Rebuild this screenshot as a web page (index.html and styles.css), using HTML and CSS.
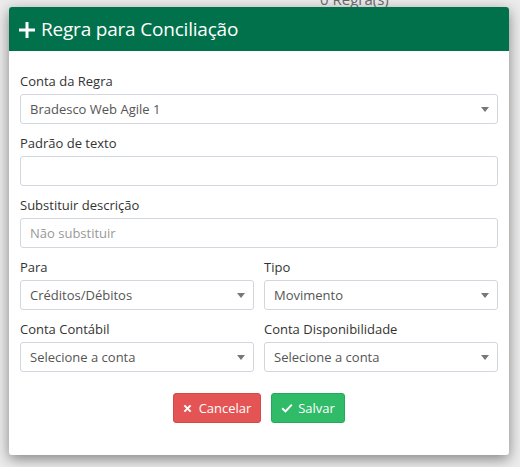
FILE: index.html
```html
<!DOCTYPE html>
<html lang="pt-BR">
<head>
<meta charset="utf-8">
<title>Regra para Conciliação</title>
<link rel="stylesheet" href="styles.css">
</head>
<body>
  <div class="backdrop-text">0 Regra(s)</div>
  <div class="modal">
    <div class="modal-header">
      <svg class="plus" viewBox="0 0 16 16" width="16" height="16" aria-hidden="true">
        <path d="M8 0v16M0 8h16" stroke="#fff" stroke-width="3" fill="none"/>
      </svg>
      <h1 class="modal-title">Regra para Conciliação</h1>
    </div>
    <form class="modal-body">
      <div class="group">
        <label class="label">Conta da Regra</label>
        <div class="select"><span>Bradesco Web Agile 1</span><i class="caret"></i></div>
      </div>
      <div class="group">
        <label class="label">Padrão de texto</label>
        <div class="input"></div>
      </div>
      <div class="group">
        <label class="label">Substituir descrição</label>
        <div class="input placeholder">Não substituir</div>
      </div>
      <div class="row">
        <div class="group">
          <label class="label">Para</label>
          <div class="select"><span>Créditos/Débitos</span><i class="caret"></i></div>
        </div>
        <div class="group">
          <label class="label">Tipo</label>
          <div class="select"><span>Movimento</span><i class="caret"></i></div>
        </div>
      </div>
      <div class="row">
        <div class="group">
          <label class="label">Conta Contábil</label>
          <div class="select"><span>Selecione a conta</span><i class="caret"></i></div>
        </div>
        <div class="group">
          <label class="label">Conta Disponibilidade</label>
          <div class="select"><span>Selecione a conta</span><i class="caret"></i></div>
        </div>
      </div>
      <div class="actions">
        <button type="button" class="btn btn-danger">
          <svg class="icon" viewBox="0 0 10 10" width="9" height="9" aria-hidden="true">
            <path d="M1.5 1.5l7 7M8.5 1.5l-7 7" stroke="#fff" stroke-width="2.2" fill="none"/>
          </svg>
          Cancelar
        </button>
        <button type="button" class="btn btn-success">
          <svg class="icon" viewBox="0 0 12 10" width="12" height="10" aria-hidden="true">
            <path d="M1.2 5.2l3.3 3.2 6.3-6.8" stroke="#fff" stroke-width="2" fill="none"/>
          </svg>
          Salvar
        </button>
      </div>
    </form>
  </div>
</body>
</html>
```

FILE: styles.css
```css
* { box-sizing: border-box; }

html, body {
  margin: 0;
  padding: 0;
}

body {
  width: 520px;
  height: 467px;
  overflow: hidden;
  background: #ececec;
  font-family: "Open Sans", "DejaVu Sans", sans-serif;
  color: #333;
}

/* page text partly hidden behind the dialog */
.backdrop-text {
  height: 11px;
  line-height: 7px;
  margin-top: -4px;
  padding-left: 320px;
  font-size: 15px;
  color: #666;
  overflow: hidden;
}

.modal {
  width: 500px;
  margin-left: 9px;
  background: #fff;
  border-radius: 3px;
  box-shadow: 0 4px 14px rgba(0, 0, 0, 0.45);
  overflow: hidden;
}

.modal-header {
  height: 44px;
  background: #00714a;
  display: flex;
  align-items: center;
  padding-left: 10px;
  gap: 6px;
}

.plus { flex: none; margin-top: 1px; }

.modal-title {
  margin: 0;
  font-size: 19px;
  font-weight: 400;
  color: #fff;
  letter-spacing: -0.2px;
}

.modal-body {
  padding: 21px 11px 32px;
}

.group { margin-bottom: 10px; }

.label {
  display: block;
  font-size: 13px;
  line-height: 18px;
  margin-bottom: 4px;
  color: #333;
}

.select, .input {
  height: 30px;
  border: 1px solid #d2d6de;
  border-radius: 3px;
  background: #fff;
  display: flex;
  align-items: center;
  padding: 0 9px;
  font-size: 13px;
  color: #555;
}

.select span { flex: 1; }

.placeholder { color: #999; }

.caret {
  width: 0;
  height: 0;
  border-left: 4px solid transparent;
  border-right: 4px solid transparent;
  border-top: 5px solid #777;
  margin-right: -1px;
}

.row {
  display: grid;
  grid-template-columns: 1fr 1fr;
  column-gap: 10px;
}

.actions {
  display: flex;
  justify-content: center;
  gap: 10px;
  margin-top: 11px;
}

.btn {
  height: 30px;
  border-radius: 3px;
  font-family: "Open Sans", "DejaVu Sans", sans-serif;
  font-size: 13px;
  color: #fff;
  display: flex;
  align-items: center;
  justify-content: center;
  gap: 5px;
  padding: 0;
  cursor: pointer;
}

.icon { flex: none; }

.btn-danger {
  background: #e45454;
  border: 1px solid #d84848;
  width: 88px;
  gap: 7px;
}

.btn-success {
  background: #2fbb68;
  border: 1px solid #26a95b;
  width: 74px;
}
```
